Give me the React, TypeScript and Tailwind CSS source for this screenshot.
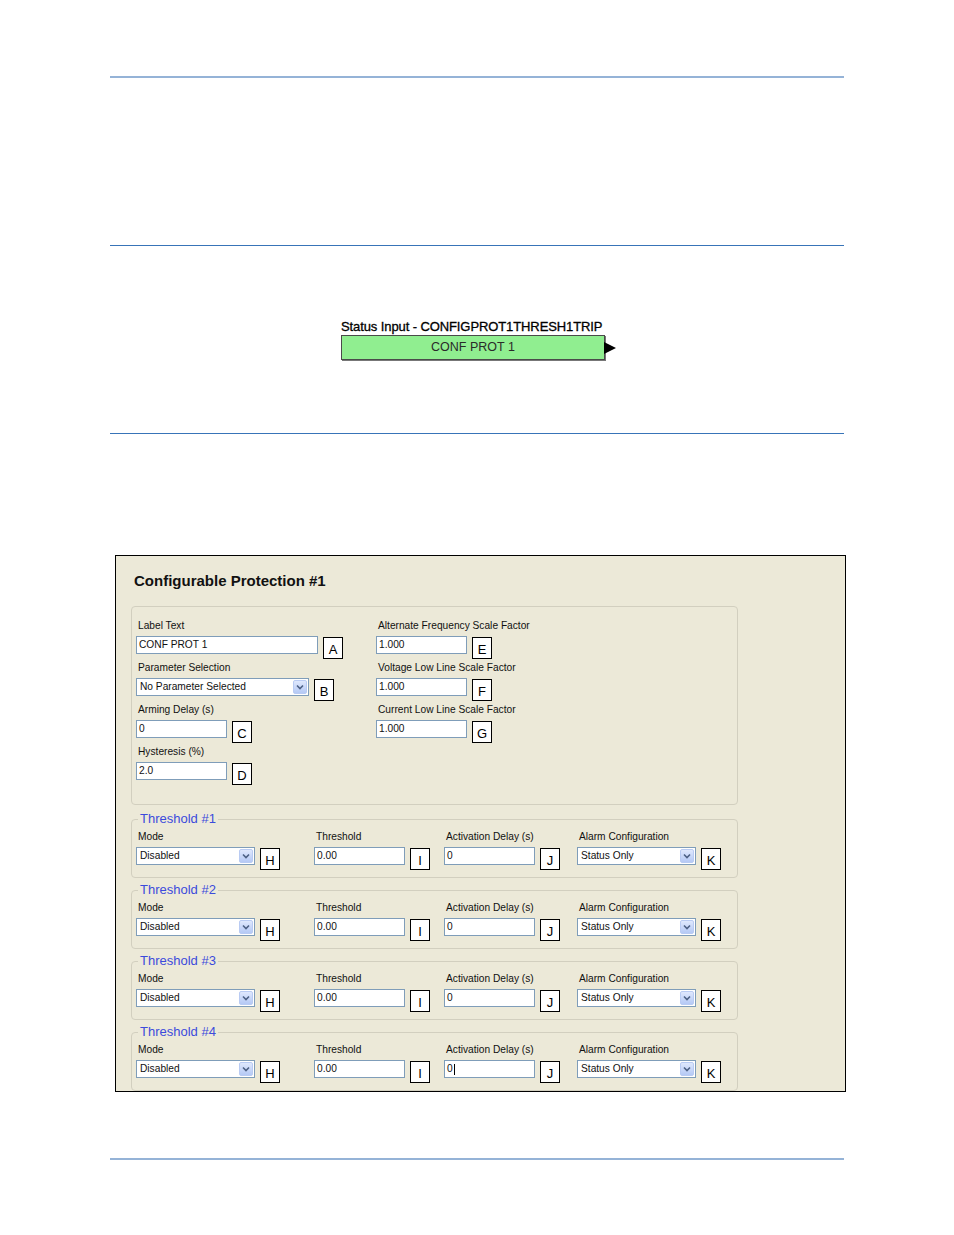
import React from "react";

const Letter = ({ c }: { c: string }) => (
  <div className="ml-[5px] mt-[1px] flex h-[22px] w-[20px] shrink-0 items-center justify-center border border-black bg-white pt-[2px] text-[13px] leading-none text-black">
    {c}
  </div>
);

const Input = ({ w, value, cursor }: { w: string; value: string; cursor?: boolean }) => (
  <div className={`${w} flex h-[18px] shrink-0 items-center border border-[#7f9db9] bg-white pl-[2px] text-[10.2px] leading-none text-[#111]`}>
    {value}
    {cursor && <span className="ml-px inline-block h-[11px] w-px bg-black" />}
  </div>
);

const Select = ({ w, value }: { w: string; value: string }) => (
  <div className={`${w} flex h-[18px] shrink-0 items-center border border-[#7f9db9] bg-white pl-[3px] text-[10.2px] leading-none text-[#111]`}>
    <span className="flex-1">{value}</span>
    <div className="m-px flex h-[14px] w-[14px] items-center justify-center rounded-[2px] border border-[#b9cbf3] bg-gradient-to-b from-[#dfe8fd] to-[#b5c9f5]">
      <svg width="8" height="6" viewBox="0 0 8 6">
        <path d="M1 1.5 L4 4.5 L7 1.5" fill="none" stroke="#4d6185" strokeWidth="1.6" />
      </svg>
    </div>
  </div>
);

const Label = ({ t }: { t: string }) => (
  <div className="ml-[2px] h-[14px] whitespace-nowrap text-[10.2px] leading-[14px] text-[#111]">{t}</div>
);

const Field = ({ label, children }: { label: string; children: React.ReactNode }) => (
  <div className="mb-[2px]">
    <Label t={label} />
    <div className="mt-[3px] flex items-start">{children}</div>
  </div>
);

const Threshold = ({ n, cursor }: { n: number; cursor?: boolean }) => (
  <fieldset className="m-0 rounded-[4px] border border-[#d2cfbf] p-0 pb-[7px] pl-[4px]">
    <legend className="ml-[2px] px-[2px] text-[13px] leading-[14px] text-[#3c4bdc]">Threshold #{n}</legend>
    <div className="mt-[4px] flex">
      <div className="w-[178px]">
        <Label t="Mode" />
        <div className="mt-[3px] flex items-start">
          <Select w="w-[119px]" value="Disabled" />
          <Letter c="H" />
        </div>
      </div>
      <div className="w-[130px]">
        <Label t="Threshold" />
        <div className="mt-[3px] flex items-start">
          <Input w="w-[91px]" value="0.00" />
          <Letter c="I" />
        </div>
      </div>
      <div className="w-[133px]">
        <Label t="Activation Delay (s)" />
        <div className="mt-[3px] flex items-start">
          <Input w="w-[91px]" value="0" cursor={cursor} />
          <Letter c="J" />
        </div>
      </div>
      <div>
        <Label t="Alarm Configuration" />
        <div className="mt-[3px] flex items-start">
          <Select w="w-[119px]" value="Status Only" />
          <Letter c="K" />
        </div>
      </div>
    </div>
  </fieldset>
);

export default function App() {
  return (
    <div className="min-h-[1235px] w-[954px] bg-white font-['Liberation_Sans',Arial,sans-serif] text-black">
      <div className="h-[76px]" />
      <div className="mx-[110px] h-[2px] bg-[#95b3d7]" />
      <div className="mx-[110px] mt-[167px] h-px bg-[#3874b8]" />

      <div className="ml-[341px] mt-[73px] w-[280px]">
        <div className="h-[15px] whitespace-nowrap text-[13px] leading-[15px] tracking-[-0.1px] text-black [-webkit-text-stroke:0.3px_black]">
          Status Input - CONFIGPROT1THRESH1TRIP
        </div>
        <div className="mt-px flex items-center">
          <div className="flex h-[25px] w-[264px] items-center justify-center border border-[#4a4a4a] bg-[#90ee90] text-[12.5px] text-[#2a2a2a] shadow-[1px_1px_0_#777]">
            CONF PROT 1
          </div>
          <svg width="12" height="12" viewBox="0 0 12 12" className="-ml-px">
            <path d="M0 0 L12 6 L0 12 Z" fill="#000" />
          </svg>
        </div>
      </div>

      <div className="mx-[110px] mt-[73px] h-px bg-[#3874b8]" />

      <div className="ml-[115px] mt-[121px] h-[537px] w-[731px] border border-black bg-[#ece9d8] px-[15px]">
        <div className="pl-[3px] pt-[16px] text-[15px] font-bold leading-[18px] text-[#111]">Configurable Protection #1</div>

        <div className="mt-[16px] flex h-[199px] w-[607px] rounded-[4px] border border-[#d2cfbf] pl-[4px] pt-[12px]">
          <div className="w-[240px]">
            <Field label="Label Text">
              <Input w="w-[182px]" value="CONF PROT 1" />
              <Letter c="A" />
            </Field>
            <Field label="Parameter Selection">
              <Select w="w-[173px]" value="No Parameter Selected" />
              <Letter c="B" />
            </Field>
            <Field label="Arming Delay (s)">
              <Input w="w-[91px]" value="0" />
              <Letter c="C" />
            </Field>
            <Field label="Hysteresis (%)">
              <Input w="w-[91px]" value="2.0" />
              <Letter c="D" />
            </Field>
          </div>
          <div>
            <Field label="Alternate Frequency Scale Factor">
              <Input w="w-[91px]" value="1.000" />
              <Letter c="E" />
            </Field>
            <Field label="Voltage Low Line Scale Factor">
              <Input w="w-[91px]" value="1.000" />
              <Letter c="F" />
            </Field>
            <Field label="Current Low Line Scale Factor">
              <Input w="w-[91px]" value="1.000" />
              <Letter c="G" />
            </Field>
          </div>
        </div>

        <div className="mt-[7px] flex w-[607px] flex-col gap-[5px]">
          <Threshold n={1} />
          <Threshold n={2} />
          <Threshold n={3} />
          <Threshold n={4} cursor />
        </div>
      </div>

      <div className="mx-[110px] mt-[66px] h-[2px] bg-[#95b3d7]" />
    </div>
  );
}
